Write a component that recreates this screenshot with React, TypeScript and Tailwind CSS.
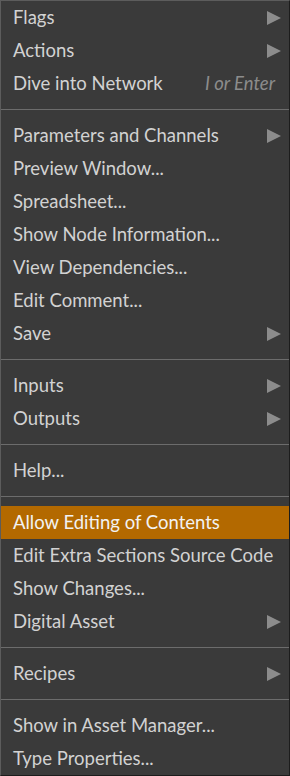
type Item =
  | { kind: "sep" }
  | { kind: "item"; label: string; sub?: boolean; shortcut?: string; active?: boolean };

const items: Item[] = [
  { kind: "item", label: "Flags", sub: true },
  { kind: "item", label: "Actions", sub: true },
  { kind: "item", label: "Dive into Network", shortcut: "I or Enter" },
  { kind: "sep" },
  { kind: "item", label: "Parameters and Channels", sub: true },
  { kind: "item", label: "Preview Window..." },
  { kind: "item", label: "Spreadsheet..." },
  { kind: "item", label: "Show Node Information..." },
  { kind: "item", label: "View Dependencies..." },
  { kind: "item", label: "Edit Comment..." },
  { kind: "item", label: "Save", sub: true },
  { kind: "sep" },
  { kind: "item", label: "Inputs", sub: true },
  { kind: "item", label: "Outputs", sub: true },
  { kind: "sep" },
  { kind: "item", label: "Help..." },
  { kind: "sep" },
  { kind: "item", label: "Allow Editing of Contents", active: true },
  { kind: "item", label: "Edit Extra Sections Source Code" },
  { kind: "item", label: "Show Changes..." },
  { kind: "item", label: "Digital Asset", sub: true },
  { kind: "sep" },
  { kind: "item", label: "Recipes", sub: true },
  { kind: "sep" },
  { kind: "item", label: "Show in Asset Manager..." },
  { kind: "item", label: "Type Properties..." },
];

function Arrow() {
  return (
    <svg width="14" height="14" viewBox="0 0 14 14" className="shrink-0">
      <polygon points="0,0 14,7 0,14" fill="#8c8c8c" />
    </svg>
  );
}

export default function App() {
  return (
    <div
      className="w-[290px] h-[776px] bg-[#3a3a3a] border-t border-l border-t-[#5c5c5c] border-l-[#5c5c5c] border-r border-b border-r-[#1c1c1c] border-b-[#1c1c1c] flex flex-col text-[18.5px] text-[#d2d2d2] overflow-hidden"
      style={{ fontFamily: '"Lato", "Noto Sans", sans-serif' }}
    >
      {items.map((it, i) =>
        it.kind === "sep" ? (
          <div key={i} className="h-[19px] flex items-center shrink-0">
            <div className="h-px w-full bg-[#6c6c6c]" />
          </div>
        ) : (
          <div
            key={i}
            className={
              "h-[33px] shrink-0 flex items-center pl-[12px] pr-[8px] " +
              (it.active ? "bg-[#b36900] text-[#f2f2f2]" : "")
            }
          >
            <span className="flex-1 whitespace-nowrap">{it.label}</span>
            {it.shortcut && (
              <span className="italic text-[#8c8c8c] pr-[6px]">{it.shortcut}</span>
            )}
            {it.sub && <Arrow />}
          </div>
        )
      )}
    </div>
  );
}
